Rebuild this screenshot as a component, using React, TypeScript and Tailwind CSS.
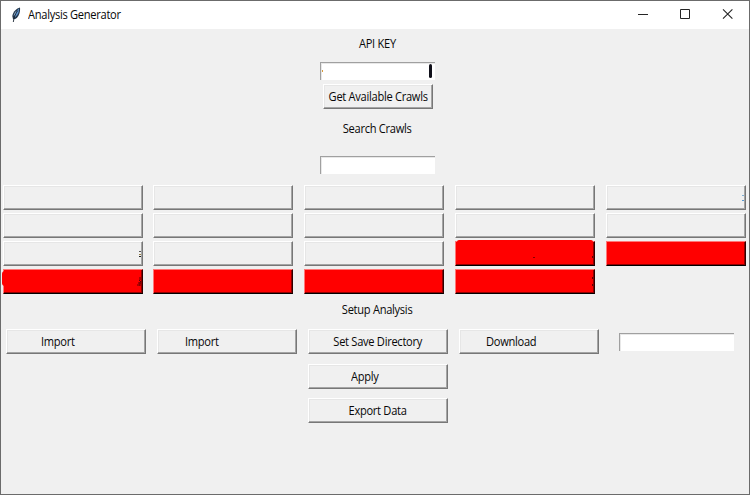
import type { ReactNode } from 'react';

function Text({ children, left = false }: { children: ReactNode; left?: boolean }) {
  return (
    <span className={`inline-block scale-x-[0.95] whitespace-nowrap ${left ? 'origin-left' : 'origin-center'}`}>
      {children}
    </span>
  );
}

function RaisedButton({ children, className = '' }: { children?: ReactNode; className?: string }) {
  return (
    <button
      className={`flex h-[25px] w-[140px] shrink-0 items-center whitespace-nowrap border border-t-white border-l-white border-r-[#777777] border-b-[#777777] bg-[#f0f0f0] pb-[2px] shadow-[inset_-1px_-1px_0_#a5a5a5,inset_1px_1px_0_#e6e6e6] ${className}`}
    >
      {children}
    </button>
  );
}

function CrawlButton({ red = false, children }: { red?: boolean; children?: ReactNode }) {
  if (!red) return <RaisedButton className="relative">{children}</RaisedButton>;
  return (
    <button className="relative h-[25px] w-[140px] shrink-0 border border-t-[#ff7777] border-l-[#ff7777] border-r-[#300000] border-b-black bg-[#ff0000] shadow-[inset_-1px_-1px_0_#900000]">
      {children}
    </button>
  );
}

function Entry({ children }: { children?: ReactNode }) {
  return (
    <div className="relative h-[18px] w-[115px] shrink-0 border-t border-l border-[#a0a0a0] bg-white shadow-[inset_1px_1px_0_#e8e8e8]">
      {children}
    </div>
  );
}

function Feather() {
  return (
    <svg width="10" height="16" viewBox="0 0 10 16">
      <path d="M9 .5C5.5 1.5 2 4.5 1.3 9L2 12.2L4.2 12C7.5 10 9.5 6 9 .5Z" fill="#24364b" />
      <path d="M8 1.5C5.8 3 4.3 6 3.8 10.5C6.8 8 8.4 5 8 1.5Z" fill="#5d93cd" />
      <path d="M6.8 3.5C4.5 6.5 3 10 2.3 15" fill="none" stroke="#182431" strokeWidth="0.9" />
      <path d="M4.8 4.5L3 8.5" stroke="#91b3cf" strokeWidth="0.9" />
    </svg>
  );
}

export default function App() {
  return (
    <div className="flex h-[495px] w-[750px] flex-col overflow-hidden border border-[#6b6b6b] bg-[#f0f0f0] font-['Open_Sans',sans-serif] text-[11.7px] leading-4 tracking-[-0.3px] text-[#080808]">
      <header className="flex h-7 shrink-0 items-center bg-white pl-[10px]">
        <Feather />
        <span className="ml-[7px] flex pb-[2px]"><Text left>Analysis Generator</Text></span>
        <svg className="ml-auto" width="112" height="28" viewBox="637 1 112 28" fill="none" stroke="#252525">
          <path d="M638 14.5H648" />
          <path d="M680.5 9.5H689.5V18.5H680.5Z" />
          <path d="M723 9.3L732.4 18.7M732.4 9.3L723 18.7" strokeWidth="1.1" />
        </svg>
      </header>

      <section className="flex shrink-0 flex-col items-start">
        <div className="mt-[6px] flex h-4 w-full justify-center pl-[5px]"><Text>API KEY</Text></div>
        <div className="mt-[11px] ml-[319px] flex">
          <Entry>
            <i className="absolute top-[7px] left-[1px] h-[2px] w-px bg-[#d89a38]" />
            <i className="absolute top-px right-[3px] h-[14px] w-[3px] rounded-full bg-[#10101a]" />
          </Entry>
        </div>
        <RaisedButton className="mt-[4px] ml-[322px] w-[110px]! justify-center"><Text>Get Available Crawls</Text></RaisedButton>
        <div className="mt-[11px] flex h-4 w-full justify-center pl-[5px]"><Text>Search Crawls</Text></div>
        <div className="mt-[20px] ml-[319px] flex"><Entry /></div>
      </section>

      <section className="mt-[11px] ml-[2px] grid w-[743px] shrink-0 grid-cols-[150px_151px_151px_151px_140px] gap-y-[3px]">
        <CrawlButton />
        <CrawlButton />
        <CrawlButton />
        <CrawlButton />
        <CrawlButton>
          <i className="absolute top-[9px] right-px h-px w-[2px] bg-[#7eafd4]" />
          <i className="absolute top-[14px] right-px h-px w-[2px] bg-[#5798d0]" />
        </CrawlButton>
        <CrawlButton />
        <CrawlButton />
        <CrawlButton />
        <CrawlButton />
        <CrawlButton />
        <CrawlButton>
          <i className="absolute top-[9px] right-px h-px w-[2px] bg-[#555]" />
          <i className="absolute top-[12px] right-px h-px w-[2px] bg-[#998044]" />
          <i className="absolute top-[14px] right-px h-px w-[2px] bg-[#222]" />
        </CrawlButton>
        <CrawlButton />
        <CrawlButton />
        <CrawlButton red>
          <i className="absolute -top-[2px] left-px h-[2px] w-[136px] rounded-t-full bg-[#ff0000]" />
          <i className="absolute top-[15px] left-[77px] h-px w-[2px] bg-[#850000]" />
          <i className="absolute top-[14px] right-px h-[2px] w-px bg-[#650000]" />
        </CrawlButton>
        <CrawlButton red />
        <CrawlButton red>
          <i className="absolute top-px -left-[2px] h-[15px] w-[3px] rounded-l-full bg-[#ff0000]" />
          <svg className="absolute top-[7px] right-0" width="5" height="10" viewBox="0 0 5 10">
            <path d="M3 0V3M2 3L4 5M1 6H4M0 8H3M3 5V9" stroke="#650000" fill="none" />
          </svg>
        </CrawlButton>
        <CrawlButton red />
        <CrawlButton red />
        <CrawlButton red>
          <i className="absolute top-[7px] right-px h-[2px] w-px bg-[#650000]" />
          <i className="absolute top-[14px] right-px h-[2px] w-px bg-[#650000]" />
        </CrawlButton>
      </section>

      <div className="mt-[7px] flex h-4 shrink-0 justify-center pl-[5px]"><Text>Setup Analysis</Text></div>
      <section className="mt-[12px] ml-[5px] flex shrink-0 items-start gap-[11px]">
        <RaisedButton className="pl-[34px]"><Text left>Import</Text></RaisedButton>
        <RaisedButton className="pl-[27px]"><Text left>Import</Text></RaisedButton>
        <RaisedButton className="justify-center"><Text>Set Save Directory</Text></RaisedButton>
        <RaisedButton className="pl-[26px]"><Text left>Download</Text></RaisedButton>
        <div className="mt-1 ml-[9px]"><Entry /></div>
      </section>
      <section className="mt-[10px] ml-[307px] flex shrink-0 flex-col gap-[9px]">
        <RaisedButton className="pl-[42px]"><Text left>Apply</Text></RaisedButton>
        <RaisedButton className="justify-center"><Text>Export Data</Text></RaisedButton>
      </section>
    </div>
  );
}
